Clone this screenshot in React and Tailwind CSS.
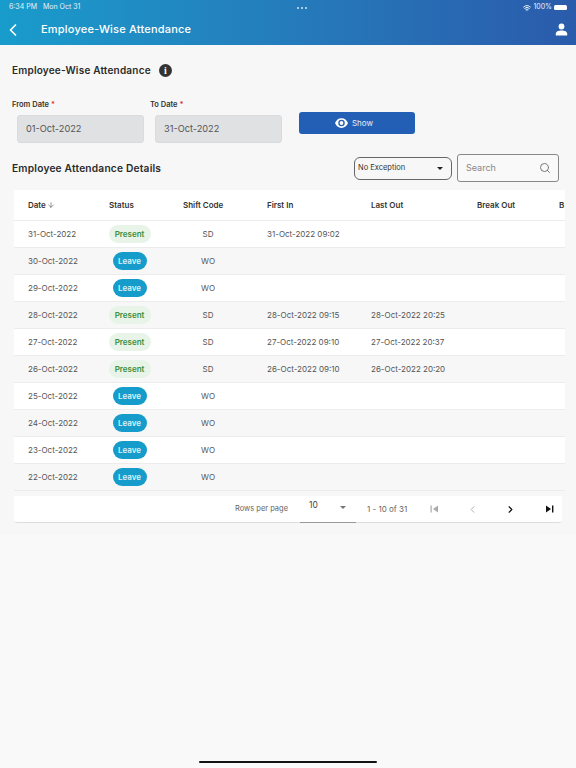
import { ChevronLeft, ChevronRight, Search, Wifi, ArrowDown } from "lucide-react";

const rows = [
  { date: "31-Oct-2022", status: "Present", shift: "SD", firstIn: "31-Oct-2022 09:02", lastOut: "" },
  { date: "30-Oct-2022", status: "Leave", shift: "WO", firstIn: "", lastOut: "" },
  { date: "29-Oct-2022", status: "Leave", shift: "WO", firstIn: "", lastOut: "" },
  { date: "28-Oct-2022", status: "Present", shift: "SD", firstIn: "28-Oct-2022 09:15", lastOut: "28-Oct-2022 20:25" },
  { date: "27-Oct-2022", status: "Present", shift: "SD", firstIn: "27-Oct-2022 09:10", lastOut: "27-Oct-2022 20:37" },
  { date: "26-Oct-2022", status: "Present", shift: "SD", firstIn: "26-Oct-2022 09:10", lastOut: "26-Oct-2022 20:20" },
  { date: "25-Oct-2022", status: "Leave", shift: "WO", firstIn: "", lastOut: "" },
  { date: "24-Oct-2022", status: "Leave", shift: "WO", firstIn: "", lastOut: "" },
  { date: "23-Oct-2022", status: "Leave", shift: "WO", firstIn: "", lastOut: "" },
  { date: "22-Oct-2022", status: "Leave", shift: "WO", firstIn: "", lastOut: "" },
];

function StatusBadge({ status }) {
  if (status === "Present") {
    return (
      <span className="flex h-[18px] w-[42px] items-center justify-center rounded-full bg-[#e8f4e8] text-[8px] font-semibold text-[#3c8f40]">
        Present
      </span>
    );
  }
  return (
    <span className="flex h-[18px] w-[34px] items-center justify-center rounded-full bg-[#169ccb] text-[8px] font-semibold text-[#dff3fa]">
      Leave
    </span>
  );
}

function DateField({ label, value }) {
  return (
    <div className="flex w-[128px] flex-col">
      <label className="text-[7.5px] leading-[10px] font-semibold text-[#333]">
        {label} <span className="text-[#d33]">*</span>
      </label>
      <div className="mt-[5px] ml-[5px] flex h-[28px] w-[127px] items-center rounded-[3px] border border-[#d9dcde] bg-[#dfe1e3] pl-[8px] text-[9.2px] text-[#555]">
        {value}
      </div>
    </div>
  );
}

export default function App() {
  return (
    <div className="flex h-[768px] w-[576px] flex-col overflow-hidden bg-[#f7f7f7] font-['Inter',sans-serif]">
      <div className="h-[45px] bg-gradient-to-r from-[#189ccb] to-[#2a5bab] text-white">
        <div className="flex h-[14px] items-center justify-between pt-[1px] pr-[9px] pl-[9px] text-[7px] text-[#e4f2f8]">
          <div className="flex gap-[6px]">
            <span>6:34 PM</span>
            <span>Mon Oct 31</span>
          </div>
          <div className="flex gap-[2px]">
            <span className="h-[2px] w-[2px] rounded-full bg-[#cfe6f2]" />
            <span className="h-[2px] w-[2px] rounded-full bg-[#cfe6f2]" />
            <span className="h-[2px] w-[2px] rounded-full bg-[#cfe6f2]" />
          </div>
          <div className="flex items-center gap-[2px]">
            <Wifi size={8} strokeWidth={3} />
            <span>100%</span>
            <span className="h-[5px] w-[13px] rounded-[1.5px] bg-white" />
          </div>
        </div>
        <div className="flex h-[31px] items-center pr-[8px] pl-[3px]">
          <ChevronLeft size={20} strokeWidth={2} />
          <span className="ml-[18px] text-[11px] font-medium tracking-[0.2px]">Employee-Wise Attendance</span>
          <svg className="ml-auto" width="13" height="13" viewBox="0 0 13 13" fill="white">
            <circle cx="6.5" cy="3.5" r="2.9" />
            <path d="M0.8 12.4v-1.6c0-2.2 2.4-3.4 5.7-3.4s5.7 1.2 5.7 3.4v1.6z" />
          </svg>
        </div>
      </div>

      <div className="flex items-center px-[12px] pt-[17px]">
        <h1 className="text-[10px] leading-[16px] font-semibold tracking-[0.2px] text-[#2b2b2b]">Employee-Wise Attendance</h1>
        <span className="ml-[8px] flex h-[13px] w-[13px] items-center justify-center rounded-full bg-[#333] font-['Liberation_Serif',serif] text-[10px] font-bold text-white">
          i
        </span>
      </div>

      <div className="mt-[22px] flex px-[12px]">
        <DateField label="From Date" value="01-Oct-2022" />
        <div className="w-[10px]" />
        <DateField label="To Date" value="31-Oct-2022" />
        <button className="mt-[12px] ml-[21px] flex h-[22px] w-[116px] items-center justify-center gap-[4px] rounded-[3px] bg-[#2360b5] pr-[6px] text-[8px] text-[#e6eef8]">
          <svg width="13" height="10" viewBox="0 0 24 18" fill="white">
            <path
              fillRule="evenodd"
              d="M12 0C6.5 0 2 3.700 0 9c2 5.300 6.500 9 12 9s10-3.700 12-9c-2-5.300-6.500-9-12-9zm0 15a6 6 0 1 1 0-12 6 6 0 0 1 0 12z"
            />
            <circle cx="12" cy="9" r="3.500" />
          </svg>
          Show
        </button>
      </div>

      <div className="mt-[11px] flex h-[28px] items-center pr-[17px] pl-[12px]">
        <h2 className="pt-[1px] text-[10.2px] font-semibold tracking-[0.2px] text-[#2b2b2b]">Employee Attendance Details</h2>
        <div className="ml-auto flex h-[23px] w-[98px] items-center justify-between rounded-[6px] border border-[#666] pr-[8px] pl-[3px] text-[7.5px] text-[#333]">
          No Exception
          <span className="h-0 w-0 border-x-[3px] border-t-[3px] border-x-transparent border-t-[#222]" />
        </div>
        <div className="ml-[5px] flex h-[28px] w-[102px] items-center justify-between rounded-[3px] border border-[#888] bg-[#f9f9f9] pr-[7px] pl-[8px] text-[9px] text-[#888]">
          Search
          <Search size={12} strokeWidth={2} className="text-[#777]" />
        </div>
      </div>

      <div className="mt-[8px] ml-[14px] w-[551px] overflow-hidden">
        <div className="grid h-[31px] grid-cols-[85px_61px_96px_104px_106px_82px_17px] items-center border-b border-[#ececec] bg-white text-[8px] font-semibold whitespace-nowrap text-[#333]">
          <span className="flex items-center gap-[1px] pl-[14px]">
            Date <ArrowDown size={8} strokeWidth={1.5} />
          </span>
          <span className="pl-[10px]">Status</span>
          <span className="pl-[23px]">Shift Code</span>
          <span className="pl-[11px]">First In</span>
          <span className="pl-[11px]">Last Out</span>
          <span className="pl-[11px]">Break Out</span>
          <span className="pl-[11px]">B</span>
        </div>
        {rows.map((row, i) => (
          <div
            key={row.date}
            className={`grid h-[27px] grid-cols-[85px_61px_96px_104px_106px_82px_17px] items-center border-b border-[#ececec] text-[8px] whitespace-nowrap text-[#555] ${
              i % 2 === 0 ? "bg-white" : "bg-[#f7f7f7]"
            }`}
          >
            <span className="pl-[14px]">{row.date}</span>
            <span className="flex justify-center">
              <StatusBadge status={row.status} />
            </span>
            <span className="text-center">{row.shift}</span>
            <span className="pl-[11px]">{row.firstIn}</span>
            <span className="pl-[11px]">{row.lastOut}</span>
          </div>
        ))}
      </div>

      <div className="mt-[5px] ml-[14px] flex h-[27px] w-[548px] items-center rounded-b-[3px] border-b border-[#ddd] bg-white text-[7.5px] text-[#666]">
        <span className="ml-[221px]">Rows per page</span>
        <div className="ml-[12px] flex h-[27px] w-[56px] items-start justify-between border-b border-[#999] pt-[3px] pr-[10px] pl-[9px] text-[8.5px] text-[#444]">
          10
          <span className="mt-[7px] h-0 w-0 border-x-[3px] border-t-[3px] border-x-transparent border-t-[#777]" />
        </div>
        <span className="ml-[11px] w-[52px] text-[8px]">1 - 10 of 31</span>
        <svg className="ml-[11px]" width="9" height="8" viewBox="0 0 9 8" fill="#aaa">
          <rect x="0.5" y="0.5" width="1.200" height="7" />
          <path d="M8 0.500v7L3 4z" />
        </svg>
        <ChevronLeft size={11} className="ml-[28px] text-[#aaa]" />
        <ChevronRight size={11} strokeWidth={2.5} className="ml-[27px] text-[#111]" />
        <svg className="ml-[29px]" width="9" height="8" viewBox="0 0 9 8" fill="#111">
          <path d="M1 0.500v7L6 4z" />
          <rect x="7" y="0.500" width="1.400" height="7" />
        </svg>
      </div>

      <div className="mt-[12px] flex-1 bg-[#f9f9f9]" />
      <div className="bg-[#f9f9f9] pb-[5px]">
        <div className="mx-auto h-[2.5px] w-[178px] rounded-full bg-[#111]" />
      </div>
    </div>
  );
}
